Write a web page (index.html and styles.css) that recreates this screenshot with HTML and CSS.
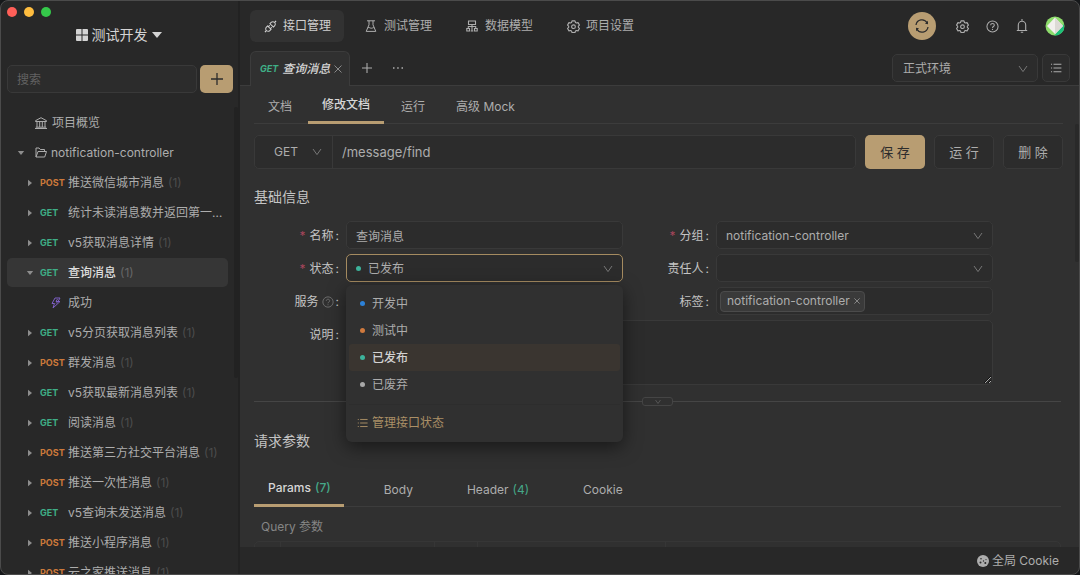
FILE: index.html
```html
<!DOCTYPE html>
<html lang="zh-CN">
<head>
<meta charset="utf-8">
<title>测试开发 - 接口管理</title>
<link rel="stylesheet" href="styles.css">
</head>
<body>
<svg class="sprite" aria-hidden="true">
  <symbol id="chevron" viewBox="0 0 12 12"><path d="M2 3l4 5.600L10 3" fill="none" stroke="currentColor"/></symbol>
  <symbol id="gear" viewBox="0 0 14 14"><g fill="none" stroke="currentColor" stroke-width="1.200" stroke-linejoin="round"><path d="M5.400 1h3.200l.5 1.700 1.100.6 1.700-.5 1.500 2.700-1.200 1.200v1.200l1.200 1.200-1.500 2.600-1.700-.4-1.100.6-.5 1.600H5.400l-.5-1.600-1.100-.6-1.700.4-1.500-2.600 1.200-1.200V6.700L.6 5.500l1.500-2.700 1.700.5 1.100-.6z"/><circle cx="7" cy="7.200" r="2"/></g></symbol>
  <symbol id="help" viewBox="0 0 14 14"><circle cx="7" cy="7" r="6" fill="none" stroke="currentColor" stroke-width="1.100"/><path d="M5 5.700c0-2.600 4-2.600 4 0C9 7 7 7 7 8.500" fill="none" stroke="currentColor" stroke-width="1.100"/><circle cx="7" cy="10.200" r=".7" fill="currentColor"/></symbol>
  <symbol id="list" viewBox="0 0 14 12"><path d="M4 1.500h9.500M4 6h9.500M4 10.500h9.500M1 1.500h1.300M1 6h1.300M1 10.500h1.300" stroke="currentColor" stroke-width="1.200"/></symbol>
  <symbol id="right" viewBox="0 0 8 8"><path d="M2 .8v6.400L6 4z" fill="currentColor"/></symbol>
  <symbol id="down" viewBox="0 0 8 8"><path d="M.8 2h6.400L4 6z" fill="currentColor"/></symbol>
  <symbol id="plus" viewBox="0 0 12 12"><path d="M6 0v12M0 6h12" stroke="currentColor" stroke-width="1.300"/></symbol>
  <symbol id="cross" viewBox="0 0 8 8"><path d="M.5.5l7 7m0-7l-7 7" stroke="currentColor"/></symbol>
</svg>
<div class="window">
  <aside class="sidebar">
    <div class="lights"><i class="red"></i><i class="amber"></i><i class="green"></i></div>
    <button class="project">
      <svg width="12" height="12" viewBox="0 0 12 12"><path d="M0 1a1 1 0 011-1h4.500v5.500H0zM6.500 0H11a1 1 0 011 1v4.500H6.500zM0 6.500h5.500V12H1a1 1 0 01-1-1zM6.500 6.500H12V11a1 1 0 01-1 1H6.500z" fill="currentColor"/></svg>
      测试开发
      <svg width="10" height="6" viewBox="0 0 10 6"><path d="M0 0h10L5 6z" fill="currentColor"/></svg>
    </button>
    <div class="search">
      <input class="field" type="text" placeholder="搜索" aria-label="搜索">
      <button class="add" aria-label="新建"><svg width="12" height="12"><use href="#plus"/></svg></button>
    </div>
    <ul class="tree">
      <li class="row overview"><svg width="12" height="12" viewBox="0 0 12 12"><path d="M.5 4.500V3.700L6 .7l5.500 3v.8zM2 4.500V10M4.700 4.500V10M7.300 4.500V10M10 4.500V10M.8 10.200h10.400M0 11.500h12" fill="none" stroke="currentColor"/></svg>项目概览</li>
      <li class="row folder"><svg width="8" height="8"><use href="#down"/></svg><svg class="folder-icon" width="12" height="11" viewBox="0 0 12 11"><path d="M1 10V1h3l1.300 1.500h4.200v2M1 10h8.700l1.800-5.500H3z" fill="none" stroke="currentColor" stroke-linejoin="round"/></svg>notification-controller</li>
      <li class="row"><svg width="8" height="8"><use href="#right"/></svg><b class="post">POST</b><span class="name">推送微信城市消息</span><small>(1)</small></li>
      <li class="row"><svg width="8" height="8"><use href="#right"/></svg><b class="get">GET</b><span class="name">统计未读消息数并返回第一批未读消息</span></li>
      <li class="row"><svg width="8" height="8"><use href="#right"/></svg><b class="get">GET</b><span class="name">v5获取消息详情</span><small>(1)</small></li>
      <li class="row selected"><svg width="8" height="8"><use href="#down"/></svg><b class="get">GET</b><span class="name">查询消息</span><small>(1)</small></li>
      <li class="row case"><svg width="10" height="12" viewBox="0 0 10 12"><path d="M4 1h5L7 4.500h2L2 11l1.500-4.500H1z" fill="none" stroke="currentColor" stroke-linejoin="round"/><path d="M5 6.500L7 4.500H5L6.500 2" fill="none" stroke="currentColor"/></svg>成功</li>
      <li class="row"><svg width="8" height="8"><use href="#right"/></svg><b class="get">GET</b><span class="name">v5分页获取消息列表</span><small>(1)</small></li>
      <li class="row"><svg width="8" height="8"><use href="#right"/></svg><b class="post">POST</b><span class="name">群发消息</span><small>(1)</small></li>
      <li class="row"><svg width="8" height="8"><use href="#right"/></svg><b class="get">GET</b><span class="name">v5获取最新消息列表</span><small>(1)</small></li>
      <li class="row"><svg width="8" height="8"><use href="#right"/></svg><b class="get">GET</b><span class="name">阅读消息</span><small>(1)</small></li>
      <li class="row"><svg width="8" height="8"><use href="#right"/></svg><b class="post">POST</b><span class="name">推送第三方社交平台消息</span><small>(1)</small></li>
      <li class="row"><svg width="8" height="8"><use href="#right"/></svg><b class="post">POST</b><span class="name">推送一次性消息</span><small>(1)</small></li>
      <li class="row"><svg width="8" height="8"><use href="#right"/></svg><b class="get">GET</b><span class="name">v5查询未发送消息</span><small>(1)</small></li>
      <li class="row"><svg width="8" height="8"><use href="#right"/></svg><b class="post">POST</b><span class="name">推送小程序消息</span><small>(1)</small></li>
      <li class="row"><svg width="8" height="8"><use href="#right"/></svg><b class="post">POST</b><span class="name">云之家推送消息</span><small>(1)</small></li>
    </ul>
    <div class="thumb side-thumb"></div>
  </aside>

  <div class="main">
    <header class="header">
      <nav class="modules">
        <a href="#api" class="active"><svg width="13" height="13" viewBox="64 64 896 896"><path fill="currentColor" d="M917.700 148.800l-42.400-42.400c-1.600-1.600-3.600-2.300-5.700-2.300s-4.100.8-5.700 2.300l-76.100 76.100a199.270 199.270 0 00-112.100-34.300c-51.200 0-102.400 19.500-141.500 58.600L432.300 308.700a8.030 8.030 0 000 11.300L704 591.700c1.600 1.600 3.600 2.300 5.700 2.300 2 0 4.100-.8 5.700-2.300l101.900-101.900c68.900-69 77-175.700 24.300-253.500l76.100-76.100c3.100-3.200 3.100-8.300 0-11.400zM769.100 441.700l-59.400 59.400-186.800-186.800 59.400-59.400c24.900-24.900 58.100-38.700 93.400-38.700 35.300 0 68.400 13.700 93.400 38.700 24.900 24.900 38.700 58.100 38.700 93.400 0 35.300-13.800 68.400-38.700 93.400zm-190.200 105a8.030 8.030 0 00-11.300 0L501 613.300 410.700 523l66.700-66.700c3.100-3.100 3.100-8.200 0-11.300L441 408.600a8.030 8.030 0 00-11.300 0L363 475.300l-43-43a7.850 7.850 0 00-5.700-2.300c-2 0-4.100.8-5.700 2.300L206.800 534.200c-68.900 69-77 175.700-24.300 253.500l-76.100 76.100a8.030 8.030 0 000 11.300l42.400 42.400c1.600 1.600 3.600 2.300 5.700 2.300s4.100-.8 5.700-2.300l76.100-76.100c33.700 22.900 72.900 34.300 112.100 34.300 51.200 0 102.400-19.500 141.500-58.600l101.900-101.900c3.100-3.100 3.100-8.200 0-11.300l-43-43 66.700-66.700c3.100-3.100 3.100-8.200 0-11.300l-36.600-36.200zM441.700 769.100a131.320 131.320 0 01-93.400 38.700c-35.300 0-68.400-13.700-93.400-38.700a131.320 131.320 0 01-38.700-93.400c0-35.300 13.700-68.400 38.700-93.400l59.400-59.400 186.800 186.800-59.400 59.400z"/></svg>接口管理</a>
        <a href="#test"><svg width="12" height="12" viewBox="0 0 12 12"><path d="M2 .8h8M4 .8v4L1.200 11.400h9.600L8 4.800v-4M2.800 7.800c1.500-1 2.500.8 4 .4s1.500-.8 2.500-.4" fill="none" stroke="currentColor"/></svg>测试管理</a>
        <a href="#model"><svg width="12" height="12" viewBox="0 0 12 12"><path d="M2.500 1h7v3.500h-7zM6 4.500v6.500M2.300 8.500V6.500h7.400v2M.8 8.500h2.700V11H.8zM8.500 8.500h2.700V11H8.500zM4.700 11h2.600" fill="none" stroke="currentColor" stroke-width="1.100"/></svg>数据模型</a>
        <a href="#settings"><svg width="13" height="13"><use href="#gear"/></svg>项目设置</a>
      </nav>
      <div class="tools">
        <button class="sync" aria-label="同步"><svg width="14" height="14" viewBox="0 0 14 14"><path d="M1 6a6 6 0 0111.200-2M13 8a6 6 0 01-11.200 2" fill="none" stroke="currentColor" stroke-width="1.300"/><path d="M13 1.800v3.400L10 4.700zM1 12.200V8.800l3 .5z" fill="currentColor"/></svg></button>
        <button aria-label="设置"><svg width="13" height="13"><use href="#gear"/></svg></button>
        <button aria-label="帮助"><svg width="13" height="13"><use href="#help"/></svg></button>
        <button aria-label="通知"><svg width="12" height="14" viewBox="0 0 12 14"><path d="M.8 11.500h10.400M2.300 11.500V6a3.700 3.700 0 017.400 0v5.500M6 0v2.300M4.800 13.200h2.400" fill="none" stroke="currentColor" stroke-width="1.100"/></svg></button>
        <button aria-label="账户"><svg width="20" height="20" viewBox="0 0 20 20"><clipPath id="disc"><circle cx="10" cy="10" r="9.500"/></clipPath><g clip-path="url(#disc)"><path d="M0 0h20v20H0z" fill="#8edc6c"/><path d="M19 8v12H9z" fill="#1cc07a"/><path d="M10 1.500l8 8.500-8 8-8-8z" fill="#f2f0ee"/><path d="M10 1.500l8 8.500-8 8z" fill="#dcd9d5"/></g></svg></button>
      </div>
    </header>

    <div class="strip">
      <div class="doc-tab"><b class="get">GET</b><span>查询消息</span><button aria-label="关闭"><svg width="8" height="8"><use href="#cross"/></svg></button></div>
      <button class="strip-button" aria-label="新标签"><svg width="10" height="10"><use href="#plus"/></svg></button>
      <button class="strip-button" aria-label="更多"><svg width="10" height="4" viewBox="0 0 10 4"><path d="M0 2h1.500M4.200 2h1.500M8.500 2H10" stroke="currentColor" stroke-width="1.300"/></svg></button>
      <label class="field environment"><select aria-label="环境"><option>正式环境</option></select><svg class="arrow" width="12" height="12"><use href="#chevron"/></svg></label>
      <button class="field env-list" aria-label="环境列表"><svg width="12" height="10"><use href="#list"/></svg></button>
    </div>

    <main class="content">
      <nav class="tabs">
        <a href="#doc">文档</a><a href="#edit" class="active">修改文档</a><a href="#run">运行</a><a href="#mock">高级 Mock</a>
      </nav>
      <div class="request">
        <div class="field url">
          <label class="method"><select aria-label="请求方法"><option>GET</option></select><svg class="arrow" width="12" height="12"><use href="#chevron"/></svg></label>
          <input type="text" value="/message/find" aria-label="请求路径">
        </div>
        <button class="action primary">保 存</button>
        <button class="action field">运 行</button>
        <button class="action field">删 除</button>
      </div>
      <h2>基础信息</h2>
      <form class="form">
        <label class="label" for="name"><em>*</em>名称<i>:</i></label>
        <input class="field" id="name" type="text" value="查询消息">
        <label class="label" for="group"><em>*</em>分组<i>:</i></label>
        <div class="field"><select id="group"><option>notification-controller</option></select><svg class="arrow" width="12" height="12"><use href="#chevron"/></svg></div>
        <label class="label" for="status"><em>*</em>状态<i>:</i></label>
        <div class="field status">
          <span class="dot teal"></span><select id="status"><option>已发布</option><option>开发中</option><option>测试中</option><option>已废弃</option></select><svg class="arrow" width="12" height="12"><use href="#chevron"/></svg>
          <div class="menu">
            <ul role="listbox" aria-label="状态">
              <li role="option"><span class="dot blue"></span>开发中</li>
              <li role="option"><span class="dot orange"></span>测试中</li>
              <li role="option" aria-selected="true"><span class="dot teal"></span>已发布</li>
              <li role="option"><span class="dot gray"></span>已废弃</li>
            </ul>
            <a href="#manage" class="manage"><svg width="11" height="10"><use href="#list"/></svg>管理接口状态</a>
          </div>
        </div>
        <label class="label" for="owner">责任人<i>:</i></label>
        <div class="field"><select id="owner"><option></option></select><svg class="arrow" width="12" height="12"><use href="#chevron"/></svg></div>
        <label class="label" for="service">服务<svg width="12" height="12"><use href="#help"/></svg><i>:</i></label>
        <div class="field"><select id="service"><option></option></select></div>
        <label class="label" for="tags">标签<i>:</i></label>
        <div class="field tags"><span class="tag">notification-controller<button type="button" aria-label="移除"><svg width="6" height="6"><use href="#cross"/></svg></button></span><input id="tags" type="text"></div>
        <label class="label" for="note">说明<i>:</i></label>
        <textarea class="field note" id="note"></textarea>
      </form>
      <div class="divider"><button aria-label="展开"><svg width="8" height="6" viewBox="0 0 8 6"><path d="M1.500 1L4 4.500 6.500 1" fill="none" stroke="currentColor"/></svg></button></div>
      <h2>请求参数</h2>
      <nav class="tabs params">
        <a href="#params" class="active">Params <span>(7)</span></a><a href="#body">Body</a><a href="#header">Header <span>(4)</span></a><a href="#cookie">Cookie</a>
      </nav>
      <p class="caption">Query 参数</p>
      <div class="grid"><table aria-label="Query 参数"><tr><th class="c1"></th><th class="c2"></th><th class="c3"></th><th class="c4"></th><th></th></tr></table></div>
      <div class="thumb main-thumb"></div>
    </main>

    <footer class="footer"><button><svg width="12" height="12" viewBox="0 0 12 12"><circle cx="6" cy="6" r="6" fill="currentColor"/><g fill="#2a2a2a"><circle cx="4" cy="3.700" r=".8"/><circle cx="3.500" cy="7.500" r="1"/><circle cx="6.500" cy="6" r=".7"/><circle cx="8.300" cy="8" r="1"/><circle cx="9" cy="4.600" r=".6"/></g></svg>全局 Cookie</button></footer>
  </div>
</div>
</body>
</html>
```
FILE: styles.css
```css
* { box-sizing: border-box; }
body {
  margin: 0;
  background: #16181a;
  color: #adadad;
  font: 12px/18px Inter, "Noto Sans CJK SC", sans-serif;
}
button, input, select, textarea { font: inherit; color: inherit; background: none; border: 0; padding: 0; margin: 0; outline: 0; }
select { appearance: none; flex: 1; min-width: 0; }
a { color: inherit; text-decoration: none; }
ul { list-style: none; margin: 0; padding: 0; }
svg { flex: none; display: block; }
i, em { font-style: normal; }
.sprite { position: absolute; width: 0; height: 0; }

.window {
  display: flex;
  height: 100vh;
  overflow: hidden;
  background: #282828;
  border: 1px solid #4b4b4b;
  border-radius: 8px;
}
.field {
  display: flex;
  align-items: center;
  height: 28px;
  padding: 0 9px;
  background: #2c2c2c;
  border: 1px solid #393939;
  border-radius: 5px;
}
.arrow { color: #777; }
.get { color: #3fae86; }
.post { color: #cc7a3b; }
.thumb { position: absolute; width: 4px; background: #222; border-radius: 2px; }

/* Sidebar */
.sidebar {
  position: relative;
  flex: none;
  width: 239px;
  overflow: hidden;
  border-right: 2px solid #222;
}
.lights { display: flex; gap: 7px; padding: 6px 6px 0; }
.lights i { width: 10px; height: 10px; border-radius: 50%; }
.red { background: #ff5f58; }
.amber { background: #ffbd3f; }
.green { background: #35c84a; }
.project {
  display: flex;
  align-items: center;
  gap: 4px;
  margin: 7px auto 0;
  padding-right: 2px;
  color: #d4d4d4;
  font-size: 14px;
  line-height: 22px;
}
.search { display: flex; gap: 3px; margin: 19px 5px 0 6px; }
.search .field { flex: 1; min-width: 0; }
.search input::placeholder { color: #626262; opacity: 1; }
.add, .primary { background: #b89d72; color: #2c2c2c; border-radius: 5px; }
.add { display: grid; place-items: center; width: 33px; height: 28px; }
.tree { display: flex; flex-direction: column; gap: 1px; margin: 15px 10px 0 6px; }
.row {
  display: flex;
  align-items: center;
  flex: none;
  height: 29px;
  padding: 0 4px 0 19px;
  white-space: nowrap;
  border-radius: 5px;
}
.row > svg { color: #8d8d8d; }
.row b { flex: none; width: 28px; margin: 0 0 0 6px; font-size: 9px; }
.name { overflow: hidden; text-overflow: ellipsis; }
.row small { margin-left: 4px; font-size: 12px; color: #4c4c4c; }
.row.overview { padding-left: 28px; gap: 5px; }
.row.overview > svg { color: #adadad; }
.row.folder { padding-left: 10px; }
.row .folder-icon { margin: 0 4px 0 10px; color: #adadad; }
.row.case { padding-left: 44px; gap: 7px; }
.row.case > svg { color: #7d5fc4; }
.row.selected { background: #363636; }
.selected .name { color: #dedede; font-weight: 500; }
.row.selected small { color: #666; }
.side-thumb { top: 106px; right: 0; height: 271px; }

/* Header */
.main { display: flex; flex: 1; flex-direction: column; min-width: 0; }
.header { display: flex; flex: none; align-items: center; justify-content: space-between; height: 50px; padding: 0 14px 0 10px; }
.modules { display: flex; gap: 7px; }
.modules a { display: flex; align-items: center; gap: 7px; height: 32px; padding: 0 13px 0 14px; border-radius: 6px; }
.modules .active { gap: 6px; background: #323232; color: #d0d0d0; }
.modules a:last-child { gap: 6px; }
.tools { display: flex; align-items: center; gap: 17px; }
.sync { display: grid; place-items: center; width: 28px; height: 28px; margin-right: 3px; border-radius: 50%; background: #b89d72; color: #2c2c2c; }

.strip { display: flex; flex: none; align-items: center; height: 35px; padding: 0 9px 0 10px; border-bottom: 1px solid #3c3c3c; }
.doc-tab {
  display: flex;
  align-items: center;
  align-self: stretch;
  gap: 4px;
  margin-bottom: -1px;
  padding: 0 7px 0 9px;
  background: #303030;
  border: 1px solid #3c3c3c;
  border-bottom: 0;
  border-radius: 6px 6px 0 0;
  font-style: italic;
  font-weight: 500;
  color: #d5d5d5;
}
.doc-tab b { font-size: 9px; }
.doc-tab button { color: #8a8a8a; }
.strip-button { display: grid; place-items: center; width: 31px; height: 28px; }
.doc-tab + .strip-button { margin-left: 1px; }
.environment { width: 146px; margin-left: auto; padding: 1px 8px 0 10px; }
.env-list { justify-content: center; width: 28px; margin-left: 4px; padding: 0; }

/* Content */
.content { position: relative; flex: 1; min-height: 0; overflow: hidden; padding: 0 16px 0 14px; background: #303030; }
.tabs { display: flex; gap: 3px; height: 38px; border-bottom: 1px solid #3c3c3c; }
.tabs a { display: flex; align-items: center; gap: 4px; padding: 4px 14px 0; }
.tabs a:first-child { padding-right: 13px; }
.tabs .active { margin-bottom: -1px; padding-top: 3px; border-bottom: 3px solid #b89d72; color: #d6d6d6; font-weight: 500; }
.tabs span { color: #45a888; }
.request { display: flex; gap: 9px; margin-top: 11px; }
.url { flex: 1; height: 34px; min-width: 0; padding: 0; }
.url > input { flex: 1; min-width: 0; padding: 0 9px; font-size: 13px; }
.method { display: flex; align-items: center; align-self: stretch; width: 78px; padding: 0 9px 0 19px; border-right: 1px solid #393939; }
.action { justify-content: center; width: 60px; height: 34px; padding: 0; font-size: 13px; }
h2 { margin: 17px 0 13px; font-size: 14px; line-height: 22px; font-weight: 400; color: #c4c4c4; }
.form { display: grid; grid-template-columns: 92px 1fr 93px 1fr; gap: 5px 0; padding-right: 70px; }
.form .field { width: 100%; min-width: 0; }
.form div.field { padding: 1px 8px 0 9px; }
.label { display: flex; align-items: center; justify-content: flex-end; height: 28px; padding: 2px 7px 0 0; color: #c4c4c4; }
.label em { margin-right: 4px; color: #a8455c; }
.label i { margin-left: 2px; }
.label svg { margin-left: 3px; color: #707070; }
.dot { flex: none; width: 5px; height: 5px; border-radius: 50%; }
.teal { background: #3db39b; }
.blue { background: #2c81d8; }
.orange { background: #d07a3e; }
.gray { background: #a8a8a8; }
.form .status { position: relative; gap: 7px; border-color: #a58b60; }
.menu {
  position: absolute;
  z-index: 1;
  top: 30px;
  left: -1px;
  right: -1px;
  padding: 5px 3px 4px;
  background: #303030;
  border-radius: 6px;
  box-shadow: 0 5px 18px rgba(0, 0, 0, .5);
}
.menu li { display: flex; align-items: center; gap: 7px; height: 27px; padding-left: 11px; border-radius: 3px; }
.menu [aria-selected] { background: #3a3530; color: #d2d2d2; font-weight: 500; }
.manage { display: flex; align-items: center; gap: 4px; margin-top: 6px; padding: 9px 8px 6px; border-top: 1px solid #2d2d2d; color: #aa8f66; }
.form div.tags { padding: 0 3px; }
.tag { display: flex; align-items: center; gap: 4px; height: 21px; padding: 0 4px 0 6px; border: 1px solid #4b4b4b; border-radius: 4px; background: #3a3a3a; }
.tag button { color: #a0a0a0; }
.tags input { flex: 1; min-width: 0; }
.form .note { grid-column: 2 / -1; height: 65px; padding: 4px 9px; }
.divider { display: flex; justify-content: center; align-items: center; margin: 12px 2px 0 0; height: 9px; background: linear-gradient(#454545, #454545) center / 100% 1px no-repeat; }
.divider button { display: grid; place-items: center; width: 31px; height: 9px; border: 1px solid #454545; border-radius: 3px; background: #303030; color: #555; }
.divider + h2 { margin: 24px 0 18px; }
.params { gap: 26px; height: 37px; margin-right: 2px; }
.params a { padding-top: 3px; }
.params .active { padding-top: 2px; }
.caption { margin: 11px 7px 5px; color: #858585; }
.grid { margin-right: 2px; border: 1px solid #363636; border-radius: 5px; overflow: hidden; }
table { width: 100%; table-layout: fixed; border-collapse: collapse; }
th { height: 30px; padding: 0; border-right: 1px solid #363636; }
th:last-child { border-right: 0; }
.c1 { width: 25px; }
.c2 { width: 154px; }
.c3 { width: 43px; }
.c4 { width: 188px; }
.main-thumb { top: 38px; right: 0; height: 138px; background: #292929; }

.footer { display: flex; flex: none; align-items: center; justify-content: flex-end; height: 27px; padding-right: 20px; }
.footer button { display: flex; align-items: center; gap: 3px; }
```
